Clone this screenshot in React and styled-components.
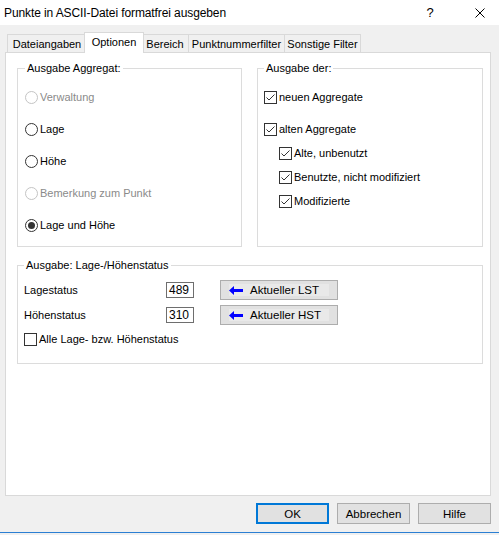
import styled, { createGlobalStyle } from "styled-components";

const GlobalStyle = createGlobalStyle`
  html, body {
    margin: 0;
    padding: 0;
  }
  body {
    background: #f0f0f0;
    font-family: "Liberation Sans", Arial, sans-serif;
    font-size: 11px;
    color: #000;
  }
  * {
    box-sizing: border-box;
  }
`;

const tabs = [
  { label: "Dateiangaben", w: 80 },
  { label: "Optionen", w: 56, active: true },
  { label: "Bereich", w: 48 },
  { label: "Punktnummerfilter", w: 97 },
  { label: "Sonstige Filter", w: 77 },
];

const radios = [
  { label: "Verwaltung", disabled: true },
  { label: "Lage" },
  { label: "Höhe" },
  { label: "Bemerkung zum Punkt", disabled: true },
  { label: "Lage und Höhe", checked: true },
];

const checks = [
  { label: "neuen Aggregate" },
  { label: "alten Aggregate" },
  { label: "Alte, unbenutzt", sub: true },
  { label: "Benutzte, nicht modifiziert", sub: true },
  { label: "Modifizierte", sub: true },
];

const Window = styled.div`
  width: 499px;
  height: 535px;
  display: flex;
  flex-direction: column;
  background: #f0f0f0;
`;

const TitleBar = styled.div`
  height: 25px;
  background: #fff;
  display: flex;
  align-items: center;
  padding-left: 4px;
  font-size: 12px;
`;

const TitleText = styled.span`
  flex: 1;
  letter-spacing: -0.1px;
`;

const HelpGlyph = styled.span`
  width: 30px;
  font-size: 13px;
  margin-right: 8px;
  text-align: center;
`;

const CloseGlyph = styled.span`
  width: 46px;
  display: flex;
  justify-content: center;
  padding-left: 8px;
`;

const Body = styled.div`
  flex: 1;
  padding: 7px 8px 0 5px;
  display: flex;
  flex-direction: column;
`;

const TabStrip = styled.div`
  display: flex;
  align-items: flex-end;
  height: 20px;
  padding-left: 2px;
`;

const Tab = styled.div`
  width: ${(p) => (p.$active ? p.$w + 4 : p.$w)}px;
  height: ${(p) => (p.$active ? 21 : 18)}px;
  margin: ${(p) => (p.$active ? "0 -3px -1px -2px" : "0 -1px 0 0")};
  border: 1px solid #d9d9d9;
  border-bottom: none;
  background: ${(p) => (p.$active ? "#fff" : "#f0f0f0")};
  display: flex;
  align-items: ${(p) => (p.$active ? "flex-start" : "center")};
  padding-top: ${(p) => (p.$active ? "3px" : "0")};
  justify-content: center;
  position: relative;
  z-index: ${(p) => (p.$active ? 2 : 1)};
  white-space: nowrap;
`;

const Panel = styled.div`
  height: 444px;
  border: 1px solid #d9d9d9;
  background: #fff;
  padding: 9px 7px 0 11px;
`;

const TopRow = styled.div`
  display: grid;
  grid-template-columns: 225px 226px;
  column-gap: 15px;
`;

const Group = styled.fieldset`
  margin: ${(p) => p.$mt || 0}px 0 0 0;
  border: 1px solid #dcdcdc;
  padding: ${(p) => p.$pt}px 6px 0 ${(p) => p.$pl}px;
  height: ${(p) => p.$h}px;
  min-width: 0;
  width: ${(p) => (p.$w ? `${p.$w}px` : "auto")};
`;

const Legend = styled.legend`
  padding: 0 2px;
  line-height: 13px;
`;

const List = styled.div`
  display: flex;
  flex-direction: column;
  gap: ${(p) => p.$gap || 0}px;
`;

const Option = styled.div`
  display: flex;
  align-items: center;
  height: 20px;
  gap: 2px;
  color: ${(p) => (p.$disabled ? "#8a8a8a" : "#000")};
  margin-top: ${(p) => p.$mt || 0}px;
  padding-left: ${(p) => (p.$sub ? 15 : 0)}px;
`;

const RadioCircle = styled.span`
  width: 13px;
  height: 13px;
  border-radius: 50%;
  border: 1px solid ${(p) => (p.$disabled ? "#c4c4c4" : "#333")};
  display: flex;
  align-items: center;
  justify-content: center;
  flex: none;
`;

const RadioDot = styled.span`
  width: 7px;
  height: 7px;
  border-radius: 50%;
  background: #333;
`;

const Box = styled.span`
  width: 13px;
  height: 13px;
  border: 1px solid #333;
  background: #fff;
  display: flex;
  flex: none;
`;

const StatusRow = styled.div`
  display: flex;
  align-items: center;
  height: 20px;
  margin-top: ${(p) => p.$mt || 0}px;
`;

const StatusLabel = styled.span`
  width: 142px;
`;

const NumberField = styled.div`
  width: 28px;
  height: 16px;
  border: 1px solid #6e6e6e;
  padding-left: 2px;
  display: flex;
  align-items: center;
  font-size: 12px;
  color: #000;
`;

const ArrowButton = styled.div`
  margin-left: 26px;
  width: 118px;
  height: 20px;
  border: 1px solid #adadad;
  background: #e1e1e1;
  padding: 3px 8px;
  display: flex;
`;

const ArrowFace = styled.span`
  flex: 1;
  background: #e9e9e9;
  display: flex;
  align-items: center;
  gap: 7px;
  font-size: 11.5px;
  white-space: nowrap;
`;

const Footer = styled.div`
  display: flex;
  justify-content: flex-end;
  gap: 8px;
  margin-top: 7px;
`;

const DialogButton = styled.div`
  width: 73px;
  height: 21px;
  background: #e1e1e1;
  border: ${(p) => (p.$default ? "2px solid #0078d7" : "1px solid #adadad")};
  display: flex;
  align-items: center;
  justify-content: center;
  font-size: 11.5px;
`;

const EdgeLine = styled.div`
  height: 1px;
  background: #2b7fd3;
  margin-bottom: 2px;
`;

const CheckMark = () => (
  <svg width="11" height="11" viewBox="0 0 11 11">
    <polyline points="1.5,5.5 4,8 9.5,2.5" fill="none" stroke="#333" strokeWidth="1" />
  </svg>
);

const CheckBox = ({ checked }) => <Box>{checked && <CheckMark />}</Box>;

const BlueArrow = () => (
  <svg width="14" height="9" viewBox="0 0 14 9">
    <polygon points="0,4.5 5,0 5,3 14,3 14,6 5,6 5,9" fill="#0000ff" />
  </svg>
);

const CloseIcon = () => (
  <svg width="10" height="10" viewBox="0 0 10 10">
    <path d="M0.5 0.5 L9.5 9.5 M9.5 0.5 L0.5 9.5" stroke="#000" strokeWidth="1" />
  </svg>
);

const App = () => (
  <Window>
    <GlobalStyle />
    <TitleBar>
      <TitleText>Punkte in ASCII-Datei formatfrei ausgeben</TitleText>
      <HelpGlyph>?</HelpGlyph>
      <CloseGlyph>
        <CloseIcon />
      </CloseGlyph>
    </TitleBar>
    <Body>
      <TabStrip>
        {tabs.map((t) => (
          <Tab key={t.label} $w={t.w} $active={t.active}>
            {t.label}
          </Tab>
        ))}
      </TabStrip>
      <Panel>
        <TopRow>
          <Group $h={185} $pt={12} $pl={7}>
            <Legend>Ausgabe Aggregat:</Legend>
            <List $gap={12}>
              {radios.map((r) => (
                <Option key={r.label} $disabled={r.disabled}>
                  <RadioCircle $disabled={r.disabled}>{r.checked && <RadioDot />}</RadioCircle>
                  {r.label}
                </Option>
              ))}
            </List>
          </Group>
          <Group $h={185} $pt={12} $pl={6}>
            <Legend>Ausgabe der:</Legend>
            <List>
              {checks.map((c, i) => (
                <Option key={c.label} $sub={c.sub} $mt={i === 0 ? 0 : c.sub ? 4 : 12}>
                  <CheckBox checked />
                  {c.label}
                </Option>
              ))}
            </List>
          </Group>
        </TopRow>
        <Group $mt={12} $h={105} $pt={8} $pl={6} $w={466}>
          <Legend>Ausgabe: Lage-/Höhenstatus</Legend>
          <StatusRow>
            <StatusLabel>Lagestatus</StatusLabel>
            <NumberField>489</NumberField>
            <ArrowButton>
              <ArrowFace>
                <BlueArrow />
                Aktueller LST
              </ArrowFace>
            </ArrowButton>
          </StatusRow>
          <StatusRow $mt={5}>
            <StatusLabel>Höhenstatus</StatusLabel>
            <NumberField>310</NumberField>
            <ArrowButton>
              <ArrowFace>
                <BlueArrow />
                Aktueller HST
              </ArrowFace>
            </ArrowButton>
          </StatusRow>
          <Option $mt={4}>
            <CheckBox />
            Alle Lage- bzw. Höhenstatus
          </Option>
        </Group>
      </Panel>
      <Footer>
        <DialogButton $default>OK</DialogButton>
        <DialogButton>Abbrechen</DialogButton>
        <DialogButton>Hilfe</DialogButton>
      </Footer>
    </Body>
    <EdgeLine />
  </Window>
);

export default App;
